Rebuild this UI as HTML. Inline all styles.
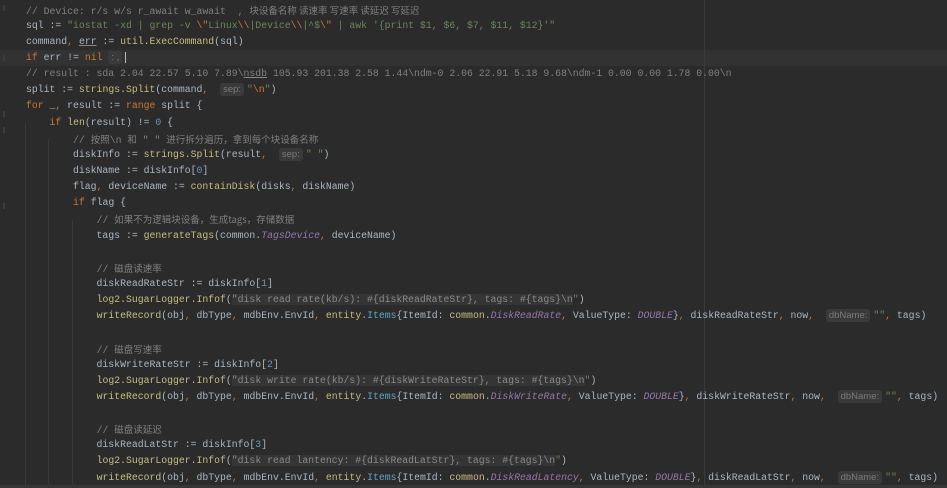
<!DOCTYPE html>
<html><head><meta charset="utf-8">
<style>
html,body{margin:0;padding:0;}
body{width:947px;height:488px;background:#2b2b2b;overflow:hidden;position:relative;
font-family:"Liberation Mono","Noto Sans CJK SC",monospace;font-size:9.8px;color:#a9b7c6;}
.l{position:absolute;left:26px;height:16px;line-height:16px;white-space:pre;}
.cur{position:absolute;left:0;width:947px;top:50px;height:16px;background:#323232;}
.g{position:absolute;width:1px;background:#393939;}
.k{color:#cc7832}
.s{color:#6a8759}
.c{color:#808080}
.cz{color:#808080;font-family:"Noto Sans CJK SC","Liberation Mono",sans-serif;font-size:9.5px}
.f{color:#c9bd7c}
.n{color:#6897bb}
.p{color:#9876aa;font-style:italic}
.t{color:#5aa8c8}
.h{display:inline-block;background:#3a3a3a;color:#7a7a7a;font-family:"Liberation Sans",sans-serif;font-size:9.5px;line-height:13px;padding:0 3px;border-radius:3px;margin-right:3px}
.inj{background:#353535;color:#8a8a8a}
.u{text-decoration:underline;text-decoration-color:#888}
.m{position:absolute;left:704px;top:0;width:1px;height:488px;background:#3a3a3a}
.tick{position:absolute;left:3px;width:2px;height:6px;background:#3c3c3c}
.bot{position:absolute;left:0;top:485px;width:947px;height:3px;background:#363636}
</style></head><body>
<div class="cur"></div>
<div class="m"></div>
<div class="g" style="left:25px;top:123px;height:365px"></div>
<div class="g" style="left:48px;top:139px;height:349px"></div>
<div class="g" style="left:72px;top:220px;height:268px"></div>
<div class="tick" style="top:5px"></div>
<div class="tick" style="top:55px"></div>
<div class="tick" style="top:111px"></div>
<div class="tick" style="top:127px"></div>
<div class="tick" style="top:203px"></div>

<div class="l" style="top:2px"><span class="c">// Device: r/s w/s r_await w_await  , </span><span class="cz">块设备名称 读速率 写速率 读延迟 写延迟</span></div>
<div class="l" style="top:18px">sql := <span class="s">"iostat -xd | grep -v </span><span class="k">\"</span><span class="s">Linux</span><span class="k">\\</span><span class="s">|Device</span><span class="k">\\</span><span class="s">|^$</span><span class="k">\"</span><span class="s"> | awk '{print $1, $6, $7, $11, $12}'"</span></div>
<div class="l" style="top:34px">command<span class="k">,</span> <span class="u">err</span> := <span class="f">util.ExecCommand</span>(sql)</div>
<div class="l" style="top:50px"><span class="k">if</span> err != <span class="k">nil</span> <span class="h">: ,</span><span style="border-left:1px solid #bbb"></span></div>
<div class="l" style="top:66px"><span class="c">// result : sda 2.04 22.57 5.10 7.89\<span class="u">nsdb</span> 105.93 201.38 2.58 1.44\ndm-0 2.06 22.91 5.18 9.68\ndm-1 0.00 0.00 1.78 0.00\n</span></div>
<div class="l" style="top:82px">split := <span class="f">strings.Split</span>(command<span class="k">,</span>  <span class="h">sep:</span><span class="s">"</span><span class="k">\n</span><span class="s">"</span>)</div>
<div class="l" style="top:98px"><span class="k">for</span> _<span class="k">,</span> result := <span class="k">range</span> split {</div>
<div class="l" style="top:115px">    <span class="k">if</span> <span class="f">len</span>(result) != <span class="n">0</span> {</div>
<div class="l" style="top:131px">        <span class="c">// </span><span class="cz">按照</span><span class="c">\n </span><span class="cz">和</span><span class="c"> " " </span><span class="cz">进行拆分遍历，拿到每个块设备名称</span></div>
<div class="l" style="top:147px">        diskInfo := <span class="f">strings.Split</span>(result<span class="k">,</span>  <span class="h">sep:</span><span class="s">" "</span>)</div>
<div class="l" style="top:163px">        diskName := diskInfo[<span class="n">0</span>]</div>
<div class="l" style="top:179px">        flag<span class="k">,</span> deviceName := <span class="f">containDisk</span>(disks<span class="k">,</span> diskName)</div>
<div class="l" style="top:195px">        <span class="k">if</span> flag {</div>
<div class="l" style="top:211px">            <span class="c">// </span><span class="cz">如果不为逻辑块设备，生成tags，存储数据</span></div>
<div class="l" style="top:228px">            tags := <span class="f">generateTags</span>(common.<span class="p">TagsDevice</span><span class="k">,</span> deviceName)</div>
<div class="l" style="top:260px">            <span class="c">// </span><span class="cz">磁盘读速率</span></div>
<div class="l" style="top:276px">            diskReadRateStr := diskInfo[<span class="n">1</span>]</div>
<div class="l" style="top:292px">            <span class="f">log2.SugarLogger.Infof</span>(<span class="inj">"disk read rate(kb/s): #{diskReadRateStr}, tags: #{tags}\n</span><span class="s">"</span>)</div>
<div class="l" style="top:308px">            <span class="f">writeRecord</span>(obj<span class="k">,</span> dbType<span class="k">,</span> mdbEnv.EnvId<span class="k">,</span> <span class="f">entity</span>.<span class="t">Items</span>{ItemId: <span class="f">common</span>.<span class="p">DiskReadRate</span><span class="k">,</span> ValueType: <span class="p">DOUBLE</span>}<span class="k">,</span> diskReadRateStr<span class="k">,</span> now<span class="k">,</span>  <span class="h">dbName:</span><span class="s">""</span><span class="k">,</span> tags)</div>
<div class="l" style="top:341px">            <span class="c">// </span><span class="cz">磁盘写速率</span></div>
<div class="l" style="top:357px">            diskWriteRateStr := diskInfo[<span class="n">2</span>]</div>
<div class="l" style="top:373px">            <span class="f">log2.SugarLogger.Infof</span>(<span class="inj">"disk write rate(kb/s): #{diskWriteRateStr}, tags: #{tags}\n</span><span class="s">"</span>)</div>
<div class="l" style="top:389px">            <span class="f">writeRecord</span>(obj<span class="k">,</span> dbType<span class="k">,</span> mdbEnv.EnvId<span class="k">,</span> <span class="f">entity</span>.<span class="t">Items</span>{ItemId: <span class="f">common</span>.<span class="p">DiskWriteRate</span><span class="k">,</span> ValueType: <span class="p">DOUBLE</span>}<span class="k">,</span> diskWriteRateStr<span class="k">,</span> now<span class="k">,</span>  <span class="h">dbName:</span><span class="s">""</span><span class="k">,</span> tags)</div>
<div class="l" style="top:421px">            <span class="c">// </span><span class="cz">磁盘读延迟</span></div>
<div class="l" style="top:437px">            diskReadLatStr := diskInfo[<span class="n">3</span>]</div>
<div class="l" style="top:453px">            <span class="f">log2.SugarLogger.Infof</span>(<span class="inj">"disk read lantency: #{diskReadLatStr}, tags: #{tags}\n</span><span class="s">"</span>)</div>
<div class="l" style="top:470px">            <span class="f">writeRecord</span>(obj<span class="k">,</span> dbType<span class="k">,</span> mdbEnv.EnvId<span class="k">,</span> <span class="f">entity</span>.<span class="t">Items</span>{ItemId: <span class="f">common</span>.<span class="p">DiskReadLatency</span><span class="k">,</span> ValueType: <span class="p">DOUBLE</span>}<span class="k">,</span> diskReadLatStr<span class="k">,</span> now<span class="k">,</span>  <span class="h">dbName:</span><span class="s">""</span><span class="k">,</span> tags)</div>
<div class="bot"></div>
</body></html>
